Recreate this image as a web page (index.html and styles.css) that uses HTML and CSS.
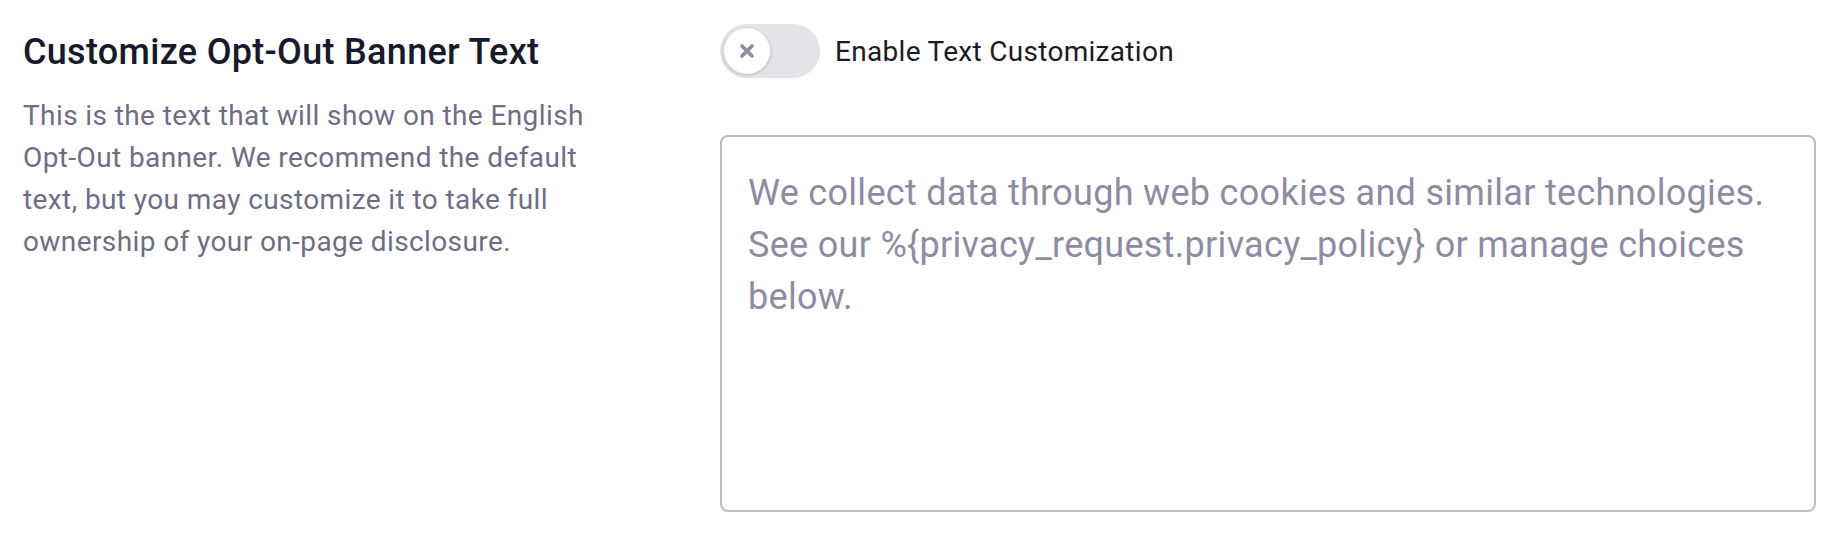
FILE: index.html
```html
<!DOCTYPE html>
<html lang="en">
<head>
  <meta charset="utf-8" />
  <meta name="viewport" content="width=device-width,initial-scale=1" />
  <title>Customize Opt-Out Banner Text</title>
  <link rel="stylesheet" href="styles.css">
</head>
<body>
  <div class="setting">
    <div class="setting-info">
      <h2>Customize Opt-Out Banner Text</h2>
      <p>This is the text that will show on the English Opt-Out banner. We recommend the default text, but you may customize it to take full ownership of your on-page disclosure.</p>
    </div>

    <div class="setting-field">
      <label class="switch-row">
        <span class="switch">
          <span class="knob">
            <svg width="18" height="18" viewBox="0 0 18 18" aria-hidden="true">
              <path d="M4 4 L14 14 M14 4 L4 14" stroke="#8b8e9c" stroke-width="3.6" stroke-linecap="round" />
            </svg>
          </span>
        </span>
        <span class="switch-label">Enable Text Customization</span>
      </label>

      <textarea class="banner-text" disabled placeholder="We collect data through web cookies and similar technologies. See our %{privacy_request.privacy_policy} or manage choices below."></textarea>
    </div>
  </div>
</body>
</html>
```

FILE: styles.css
```css
/* — base — */
body {
  margin: 0;
  background: #fff;
  font-family: Roboto, "Liberation Sans", sans-serif;
}
.setting {
  display: flex;
  padding: 24px 24px 0 23px;
}

/* — left: title + help — */
.setting-info {
  width: 697px;
  flex-shrink: 0;
}
.setting-info h2 {
  margin: 7px 0 22px;
  font-size: 36px; line-height: 42px; font-weight: 500;
  letter-spacing: 0.3px;
  color: #171a2c;
}
.setting-info p {
  margin: 0;
  width: 580px;
  font-size: 28px; line-height: 42px;
  letter-spacing: 0.4px;
  color: #6e6d87;
}

/* — right: switch + textarea — */
.setting-field { flex: 1; }

.switch-row {
  display: flex; align-items: center; gap: 15px;
  cursor: pointer;
}
.switch {
  width: 100px; height: 54px;
  border-radius: 27px;
  background: #e3e4e9;
  padding: 4px;
  box-sizing: border-box;
  display: flex; align-items: center;
}
.knob {
  width: 46px; height: 46px;
  border-radius: 50%;
  background: #fff;
  box-shadow: 0 1px 4px rgba(0,0,0,0.18);
  display: flex; justify-content: center; align-items: center;
}
.switch-label {
  font-size: 28px;
  letter-spacing: 0.3px;
  color: #1b1b27;
}

.banner-text {
  display: block;
  width: 100%; height: 377px;
  margin-top: 57px;
  box-sizing: border-box;
  padding: 30px 26px;
  border: 2px solid #bdbdbd; border-radius: 8px;
  background: #fff;
  font-family: inherit;
  font-size: 36px; line-height: 52px;
  letter-spacing: 0.3px;
  color: #8e8ba5;
  resize: none;
}
.banner-text::placeholder { color: #8e8ba5; opacity: 1; }
```
